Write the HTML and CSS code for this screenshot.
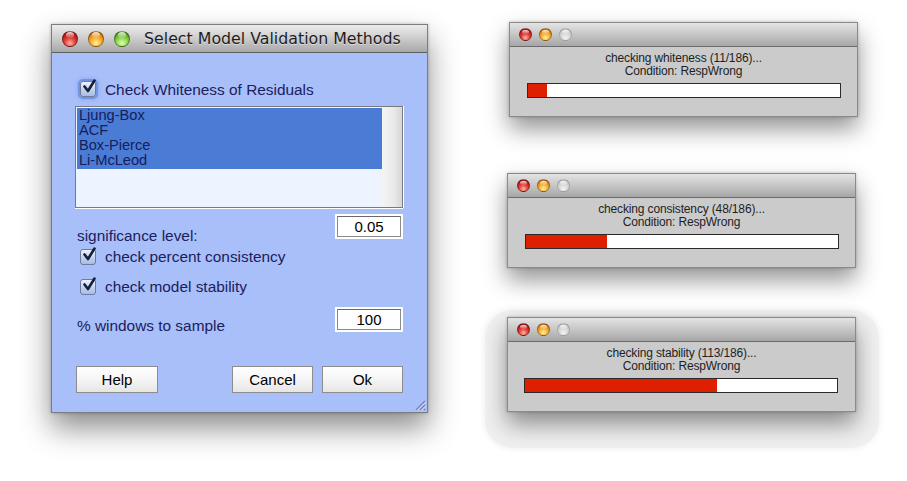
FILE: index.html
```html
<!DOCTYPE html>
<html>
<head>
<meta charset="utf-8">
<link rel="stylesheet" href="styles.css">
</head>
<body>
<div class="desk">
  <div class="dialog">
    <div class="titlebar">
      <span class="lights big">
        <i class="light red"></i><i class="light orange"></i><i class="light green"></i>
      </span>
      <span class="title">Select Model Validation Methods</span>
    </div>
    <div class="dbody">
      <div class="check first">
        <span class="cb focus"><svg viewBox="0 0 16 16" width="16" height="16"><path d="M3.5 7.5 L7 12 L13.5 1.5" fill="none" stroke="#15203f" stroke-width="2.6" stroke-linecap="round" stroke-linejoin="round"/></svg></span>
        <span class="ctext">Check Whiteness of Residuals</span>
      </div>
      <div class="listbox">
        <div class="items">
          <div class="sel">
            <div>Ljung-Box</div>
            <div>ACF</div>
            <div>Box-Pierce</div>
            <div>Li-McLeod</div>
          </div>
        </div>
        <div class="scroll"></div>
      </div>
      <div class="row sig">
        <span class="lbl">significance level:</span>
        <span class="field"><span class="fin">0.05</span></span>
      </div>
      <div class="check second">
        <span class="cb"><svg viewBox="0 0 16 16" width="16" height="16"><path d="M3.5 7.5 L7 12 L13.5 1.5" fill="none" stroke="#15203f" stroke-width="2.6" stroke-linecap="round" stroke-linejoin="round"/></svg></span>
        <span class="ctext">check percent consistency</span>
      </div>
      <div class="check third">
        <span class="cb"><svg viewBox="0 0 16 16" width="16" height="16"><path d="M3.5 7.5 L7 12 L13.5 1.5" fill="none" stroke="#15203f" stroke-width="2.6" stroke-linecap="round" stroke-linejoin="round"/></svg></span>
        <span class="ctext">check model stability</span>
      </div>
      <div class="row win">
        <span class="lbl">% windows to sample</span>
        <span class="field"><span class="fin">100</span></span>
      </div>
      <div class="buttons">
        <span class="btn help">Help</span>
        <span class="btn cancel">Cancel</span>
        <span class="btn ok">Ok</span>
      </div>
    </div>
    <svg class="grip" viewBox="0 0 12 12" width="12" height="12">
      <path d="M11 2 L2 11 M11 6 L6 11 M11 10 L10 11" stroke="#6f7fa8" stroke-width="1.2"/>
      <path d="M11.8 2.8 L2.8 11.8 M11.8 6.8 L6.8 11.8" stroke="#dfe6ff" stroke-width="0.8"/>
    </svg>
  </div>

  <div class="pcol">
    <div class="pwin w1">
      <div class="ptitle">
        <span class="lights small"><i class="light red"></i><i class="light orange"></i><i class="light gray"></i></span>
      </div>
      <div class="pbody">
        <div class="ptext">checking whiteness (11/186)...</div>
        <div class="ptext">Condition: RespWrong</div>
        <div class="bar"><div class="fill" style="width:19px"></div></div>
      </div>
    </div>
    <div class="pwin w2">
      <div class="ptitle">
        <span class="lights small"><i class="light red"></i><i class="light orange"></i><i class="light gray"></i></span>
      </div>
      <div class="pbody">
        <div class="ptext">checking consistency (48/186)...</div>
        <div class="ptext">Condition: RespWrong</div>
        <div class="bar"><div class="fill" style="width:81px"></div></div>
      </div>
    </div>
    <div class="halo">
      <div class="pwin w3">
        <div class="ptitle">
          <span class="lights small"><i class="light red"></i><i class="light orange"></i><i class="light gray"></i></span>
        </div>
        <div class="pbody">
          <div class="ptext">checking stability (113/186)...</div>
          <div class="ptext">Condition: RespWrong</div>
          <div class="bar"><div class="fill" style="width:192px"></div></div>
        </div>
      </div>
    </div>
  </div>
</div>
</body>
</html>
```

FILE: styles.css
```css
html, body {
  margin: 0;
  padding: 0;
  background: #ffffff;
}
body {
  width: 907px;
  height: 481px;
  overflow: hidden;
  font-family: "Liberation Sans", Arial, sans-serif;
}
.desk {
  display: flex;
  align-items: flex-start;
  padding: 22px 0 0 51px;
}

/* ---------- main dialog ---------- */
.dialog {
  position: relative;
  margin-top: 2px;
  width: 377px;
  height: 389px;
  box-sizing: border-box;
  border: 1px solid #7d7d7d;
  background: #a9bffa;
  display: flex;
  flex-direction: column;
  box-shadow: 0 15px 28px rgba(0, 0, 0, 0.45), 0 0 3px rgba(0, 0, 0, 0.25);
}
.titlebar {
  height: 28px;
  box-sizing: border-box;
  background: linear-gradient(#ececec, #cfcfcf 45%, #a8a8a8);
  border-bottom: 1px solid #5e5e5e;
  display: flex;
  align-items: center;
  padding-left: 10px;
}
.title {
  margin-left: 14px;
  font-family: "DejaVu Sans", sans-serif;
  font-size: 15.8px;
  color: #1d1d1d;
  text-shadow: 0 1px 0 rgba(255, 255, 255, 0.5);
  white-space: nowrap;
}
.lights {
  display: flex;
}
.lights.big { gap: 10px; }
.lights.small { gap: 7px; }
.light {
  position: relative;
  display: block;
  border-radius: 50%;
  box-sizing: border-box;
  border: 1px solid rgba(0, 0, 0, 0.35);
}
.lights.big .light { width: 16px; height: 16px; }
.lights.small .light { width: 13px; height: 13px; }
.light::after {
  content: "";
  position: absolute;
  left: 20%;
  top: 6%;
  width: 60%;
  height: 42%;
  border-radius: 50%;
  background: linear-gradient(rgba(255, 255, 255, 0.85), rgba(255, 255, 255, 0.05));
}
.light.red {
  background: radial-gradient(circle at 50% 80%, #ffb7a8 0%, #e5453e 38%, #c21d1d 65%, #8d0f0f 100%);
}
.light.orange {
  background: radial-gradient(circle at 50% 80%, #fff0a0 0%, #f7b436 40%, #df8212 70%, #a75a06 100%);
}
.light.green {
  background: radial-gradient(circle at 50% 80%, #e2ffb0 0%, #94d957 40%, #5fae26 70%, #3b7a12 100%);
}
.light.gray {
  border-color: rgba(0, 0, 0, 0.2);
  background: radial-gradient(circle at 50% 80%, #f2f2f2 0%, #d4d4d4 50%, #b6b6b6 100%);
}

.dbody {
  padding: 27px 24px 0 23px;
  display: flex;
  flex-direction: column;
  color: #1b205c;
  font-size: 15.4px;
}
.check {
  display: flex;
  align-items: center;
  height: 17px;
}
.check.first { height: 18px; }
.check.second { margin-top: 4px; }
.check.third { margin-top: 13px; }
.cb {
  position: relative;
  margin-left: 5px;
  width: 16px;
  height: 16px;
  box-sizing: border-box;
  border: 1px solid #6d7c9e;
  border-radius: 3px;
  background: linear-gradient(#eef3fc, #c2d2ee 55%, #a8bde4);
  flex: none;
}
.cb svg {
  position: absolute;
  left: 0;
  top: -3px;
}
.cb.focus {
  box-shadow: 0 0 0 2px rgba(90, 125, 215, 0.55), 0 0 4px 2px rgba(90, 125, 215, 0.45);
}
.ctext {
  margin-left: 9px;
  line-height: 17px;
  white-space: nowrap;
}

.listbox {
  margin-top: 8px;
  height: 102px;
  box-sizing: border-box;
  border: 1px solid #7a7a7a;
  box-shadow: 0 1px 0 #ffffff, 1px 0 0 #ffffff;
  display: flex;
}
.items {
  flex: 1;
  background: #eef4ff;
  padding: 1px 0 0 1px;
}
.sel {
  background: #4a7bd5;
  padding: 0 0 1px 2px;
  font-size: 14.6px;
  line-height: 15px;
  color: #14205a;
}
.scroll {
  width: 20px;
  background: linear-gradient(90deg, #f4f4f4, #e9e9e9 60%, #d6d6d6);
}

.row {
  display: flex;
  justify-content: space-between;
  align-items: flex-start;
}
.row.sig { margin-top: 6px; }
.row.win { margin-top: 12px; }
.lbl {
  margin-left: 2px;
  line-height: 17px;
  white-space: nowrap;
}
.row.sig .lbl { margin-top: 13px; }
.row.win .lbl { margin-top: 10px; }
.field {
  width: 68px;
  height: 25px;
  box-sizing: border-box;
  border: 2px solid #ffffff;
  display: flex;
}
.fin {
  flex: 1;
  border: 1px solid #8a8a8a;
  border-top-color: #6a6a6a;
  background: #ffffff;
  color: #000000;
  font-size: 15px;
  display: flex;
  align-items: center;
  justify-content: center;
}

.buttons {
  margin-top: 32px;
  display: flex;
  gap: 9px;
}
.btn {
  height: 27px;
  box-sizing: border-box;
  border: 1px solid #8d8d8d;
  background: linear-gradient(#ffffff, #f5f5f5 50%, #e6e6e6);
  color: #000000;
  font-size: 15px;
  display: flex;
  align-items: center;
  justify-content: center;
}
.btn.help { width: 82px; margin-left: 1px; }
.btn.cancel { width: 81px; margin-left: auto; }
.btn.ok { width: 81px; }
.grip {
  position: absolute;
  right: 1px;
  bottom: 1px;
}

/* ---------- progress windows ---------- */
.pcol {
  margin-left: 57px;
  display: flex;
  flex-direction: column;
  align-items: flex-start;
}
.pwin {
  width: 349px;
  height: 95px;
  box-sizing: border-box;
  border: 1px solid #8a8a8a;
  background: #cbcbcb;
  box-shadow: 0 12px 22px rgba(0, 0, 0, 0.42), 0 0 3px rgba(0, 0, 0, 0.22);
}
.w1 { margin-left: 24px; }
.w2 { margin-left: 22px; margin-top: 56px; }
.halo {
  margin-top: 42px;
  padding: 7px 23px 36px 22px;
  background: #f0f0f0;
  border-radius: 28px;
  box-shadow: 0 0 6px 2px #f5f5f5;
}
.ptitle {
  height: 24px;
  box-sizing: border-box;
  background: linear-gradient(#e4e4e4, #c9c9c9 45%, #a6a6a6);
  border-bottom: 1px solid #6c6c6c;
  display: flex;
  align-items: center;
  padding-left: 9px;
}
.pbody {
  padding-top: 5px;
  display: flex;
  flex-direction: column;
  align-items: center;
}
.ptext {
  font-size: 12px;
  letter-spacing: -0.15px;
  line-height: 13px;
  color: #1e1e1e;
  white-space: nowrap;
}
.bar {
  align-self: flex-start;
  margin: 5px 0 0 17px;
  width: 314px;
  height: 15px;
  box-sizing: border-box;
  border: 1px solid #2a2a2a;
  background: #ffffff;
}
.w3 .bar { margin-left: 16px; }
.fill {
  height: 100%;
  background: #de1f00;
}
```
